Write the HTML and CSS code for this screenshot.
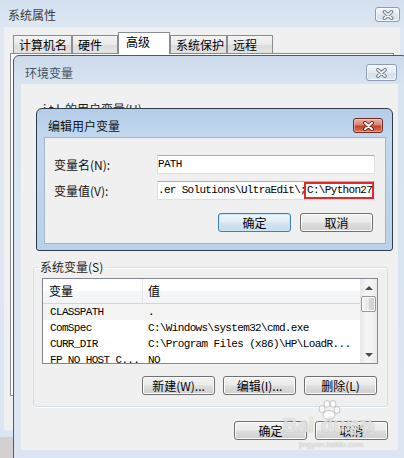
FILE: index.html
```html
<!DOCTYPE html>
<html lang="zh-CN">
<head>
<meta charset="utf-8">
<title>系统属性</title>
<link rel="stylesheet" href="styles.css">
</head>
<body>
<section class="win sys">
  <header class="tb">
    <span class="tt">系统属性</span>
    <span class="cls">
      <svg width="12" height="10" viewBox="0 0 12 10"><path d="M2.5 1.8L9.5 8.2M9.5 1.8L2.5 8.2" stroke="#6a7888" stroke-width="3.6" stroke-linecap="round"/><path d="M2.5 1.8L9.5 8.2M9.5 1.8L2.5 8.2" stroke="#f6f8fb" stroke-width="1.8" stroke-linecap="round"/></svg>
    </span>
  </header>
  <div class="client">
    <nav class="tabs">
      <span class="tab t1">计算机名</span>
      <span class="tab t2">硬件</span>
      <span class="tab t3 sel">高级</span>
      <span class="tab t4">系统保护</span>
      <span class="tab t5">远程</span>
    </nav>
    <div class="panel"></div>
  </div>
</section>

<section class="win env">
  <header class="tb">
    <span class="tt">环境变量</span>
    <span class="cls">
      <svg width="13" height="10" viewBox="0 0 13 10"><path d="M3 1.8L10 8.2M10 1.8L3 8.2" stroke="#6a7888" stroke-width="3.6" stroke-linecap="round"/><path d="M3 1.8L10 8.2M10 1.8L3 8.2" stroke="#f6f8fb" stroke-width="1.8" stroke-linecap="round"/></svg>
    </span>
  </header>
  <div class="client">
    <div class="user">
      <span class="ulbl">i t l &nbsp;的用户变量(U)</span>
    </div>
    <fieldset class="grp sysvars">
      <legend>系统变量(S)</legend>
      <div class="list">
        <div class="cols">
          <div class="hdr"><span class="c1">变量</span><span class="c2">值</span></div>
          <div class="row cur"><span class="c1">CLASSPATH</span><span class="c2">.</span></div>
          <div class="row"><span class="c1">ComSpec</span><span class="c2">C:\Windows\system32\cmd.exe</span></div>
          <div class="row"><span class="c1">CURR_DIR</span><span class="c2">C:\Program Files (x86)\HP\LoadR...</span></div>
          <div class="row"><span class="c1">FP_NO_HOST_C...</span><span class="c2">NO</span></div>
        </div>
        <div class="sb">
          <span class="sbtn"><i class="up"></i></span>
          <span class="thumb"></span>
          <span class="track"></span>
          <span class="sbtn"><i class="dn"></i></span>
        </div>
      </div>
      <div class="btns">
        <button class="btn">新建(W)...</button>
        <button class="btn">编辑(I)...</button>
        <button class="btn">删除(L)</button>
      </div>
    </fieldset>
    <div class="btns bottom">
      <button class="btn">确定</button>
      <button class="btn">取消</button>
    </div>
  </div>
</section>

<section class="win edit">
  <header class="tb">
    <span class="tt">编辑用户变量</span>
    <span class="cls red">
      <svg width="13" height="10" viewBox="0 0 13 10"><path d="M3 1.8L10 8.2M10 1.8L3 8.2" stroke="#6e2418" stroke-width="3.8" stroke-linecap="round"/><path d="M3 1.8L10 8.2M10 1.8L3 8.2" stroke="#ffffff" stroke-width="2" stroke-linecap="round"/></svg>
    </span>
  </header>
  <div class="client">
    <div class="form">
      <label class="lbl">变量名(N):</label>
      <div class="inp">PATH</div>
      <label class="lbl">变量值(V):</label>
      <div class="inp">.er Solutions\UltraEdit\;<span class="mark">C:\Python27</span></div>
    </div>
    <div class="btns">
      <button class="btn def">确定</button>
      <button class="btn">取消</button>
    </div>
  </div>
</section>

<div class="wm">
  <span class="wm-bai">Bai</span><span class="wm-paw">
    <svg width="24" height="20" viewBox="0 0 24 20"><g fill="rgba(255,255,255,0.7)" stroke="rgba(150,150,150,0.5)" stroke-width="1"><ellipse cx="5" cy="9" rx="3" ry="3.5"/><ellipse cx="10" cy="4" rx="3" ry="3.5"/><ellipse cx="16" cy="4" rx="3" ry="3.5"/><ellipse cx="20" cy="10" rx="3" ry="3.5"/><ellipse cx="12" cy="15" rx="6" ry="4.5"/></g></svg>
  </span><span class="wm-du">du</span><span class="wm-jy">经验</span>
  <span class="wm-url">jingyan.baidu.com</span>
</div>
</body>
</html>
```
FILE: styles.css
```css
* { box-sizing: border-box; margin: 0; padding: 0; }
html, body { width: 404px; height: 458px; overflow: hidden; }
body {
  position: relative;
  background: #d4d0d1;
  font-family: "Noto Sans CJK SC", "Noto Sans", sans-serif;
  font-size: 12px;
  color: #000;
}

.win { position: absolute; display: flex; flex-direction: column; }
.tb { display: flex; align-items: center; justify-content: space-between; }
.tt { line-height: 14px; white-space: nowrap; }

.cls {
  display: flex; align-items: center; justify-content: center;
  border: 1px solid #8d9cb0; border-radius: 3px;
  background: linear-gradient(#f4f7fb, #e3eaf3 50%, #d6e0eb 51%, #dfe7f1);
  box-shadow: inset 0 0 0 1px rgba(255,255,255,0.6);
}
.cls.red {
  border-color: #6e2a22;
  background: linear-gradient(#eab1a4, #d9826f 45%, #c2432b 55%, #d2775a);
  box-shadow: inset 0 0 0 1px rgba(255,220,210,0.5);
}

/* ---------- outer window: 系统属性 ---------- */
.sys {
  left: 0; top: 0; width: 404px; height: 437px;
  background: linear-gradient(#d3e0ef, #dfe8f3 30px, #dce6f2);
}
.sys .tb { height: 27px; padding: 2px 4px 0 8px; }
.sys .tt { color: #3c3c3c; }
.sys .cls { width: 25px; height: 15px; }
.sys .client {
  flex: 1; margin: 0 4px 7px 4px;
  background: #f0f0f0; padding: 5px 6px 0 6px;
}
.tabs { display: flex; align-items: flex-end; height: 22px; margin-left: 3px; position: relative; z-index: 1; }
.tab {
  height: 18px; margin-bottom: 1px;
  border: 1px solid #898c95; border-bottom: none;
  background: linear-gradient(#f4f4f4, #e9e9e9 50%, #dcdcdc 51%, #e3e3e3);
  padding: 1px 0 0 5px; line-height: 15px; white-space: nowrap;
}
.t1 { width: 59px; }
.t2 { width: 46px; }
.t3 { width: 52px; }
.t4 { width: 57px; }
.t5 { width: 46px; }
.tab.sel { height: 22px; margin-bottom: 0; background: #fff; padding: 1px 0 0 7px; }
.panel { margin-top: -1px; height: 343px; border: 1px solid #898c95; background: #fff; }

/* ---------- 环境变量 ---------- */
.env {
  left: 13px; top: 55px; width: 395px; height: 410px;
  border: 1px solid #4d5967; border-radius: 6px 6px 0 0;
  background: linear-gradient(#cbd9ea, #d9e4f1 28px, #dbe6f2);
}
.env .tb { height: 28px; padding: 5px 10px 0 11px; }
.env .tt { color: #46515e; }
.env .cls { width: 31px; height: 17px; }
.env > .client {
  margin-left: 7px; width: 377px; height: 366px;
  background: #f0f0f0; padding: 0 10px 0 12px;
  display: flex; flex-direction: column;
}

.user { height: 176px; flex: none; padding: 18px 0 0 10px; }
.ulbl { display: block; line-height: 14px; color: #1e1e1e; white-space: nowrap; }

.grp {
  border: 1px solid #d5dfe5; border-radius: 3px;
  min-inline-size: 0; padding: 4px 9px 0 8px;
  box-shadow: 0 1px 0 #fff, inset 0 1px 0 #fff;
}
.grp legend { padding: 0 2px; margin-left: -4px; line-height: 14px; color: #1e1e1e; }
.sysvars { height: 147px; flex: none; }

.list {
  width: 336px; height: 86px;
  border: 1px solid #828790; background: #fff;
  display: flex; overflow: hidden;
}
.cols { flex: 1; display: flex; flex-direction: column; }
.hdr, .row { display: grid; grid-template-columns: 100px 1fr; }
.hdr {
  height: 25px; flex: none;
  background: linear-gradient(#ffffff, #ffffff 50%, #f7f8f9 51%, #f2f3f5);
  border-bottom: 1px solid #d5d5d5;
  line-height: 24px;
}
.hdr .c1 { padding-left: 6px; border-right: 1px solid #e3e4e7; }
.hdr .c2 { padding-left: 5px; }
.row {
  height: 16px; flex: none; line-height: 16px;
  font-family: "Liberation Mono", "DejaVu Sans Mono", monospace;
  font-size: 11px; letter-spacing: -0.65px; white-space: nowrap; overflow: hidden;
}
.row .c1 { padding-left: 7px; overflow: hidden; }
.row .c2 { padding-left: 5px; }
.row.cur { background: #f3f3f3; }

.sb {
  width: 17px; flex: none; display: flex; flex-direction: column;
  background: linear-gradient(90deg, #e8e8e8, #f5f5f5 40%, #f5f5f5 60%, #ebebeb);
}
.sbtn { height: 17px; flex: none; display: flex; align-items: center; justify-content: center; }
.up, .dn { width: 0; height: 0; border-left: 4px solid transparent; border-right: 4px solid transparent; }
.up { border-bottom: 4px solid #4b4b4b; }
.dn { border-top: 4px solid #4b4b4b; }
.thumb {
  height: 16px; flex: none; margin: 0 1px;
  border: 1px solid #979797; border-radius: 2px;
  background: linear-gradient(90deg, #f3f3f3, #e9e9e9 50%, #d9d9d9 51%, #d0d0d0);
  box-shadow: inset 0 0 0 1px #fbfbfb;
}
.track { flex: 1; }

.btns { display: flex; justify-content: flex-end; gap: 8px; }
.sysvars .btns { margin-top: 12px; margin-right: 1px; }
.bottom { margin-top: 14px; }
.btn {
  width: 73px; height: 19px;
  font: inherit; color: #000; line-height: 15px;
  border: 1px solid #707070; border-radius: 3px;
  background: linear-gradient(#f2f2f2, #ebebeb 45%, #dddddd 55%, #cfcfcf);
  box-shadow: inset 0 0 0 1px #fcfcfc;
}
.btn.def {
  border-color: #3c7fb1;
  background: linear-gradient(#eef6fb, #e2eef6 45%, #d2e4f0 55%, #c6dbea);
  box-shadow: inset 0 0 0 1px #c8e8fa;
}

/* ---------- 编辑用户变量 ---------- */
.edit {
  left: 36px; top: 108px; width: 357px; height: 143px;
  border: 1px solid #2f3c4b; border-radius: 6px 6px 3px 3px;
  background: linear-gradient(#b4cce8, #c3d8ef 28px, #b9d1ea);
}
.edit .tb { height: 28px; padding: 5px 9px 0 11px; }
.edit .tt { color: #111; }
.edit .cls { width: 30px; height: 15px; }
.edit .client {
  margin-left: 7px; width: 342px; height: 107px;
  background: #f0f0f0; border: 1px solid #a0b4cc;
  padding: 17px 12px 0 9px;
  display: flex; flex-direction: column;
}
.form { display: grid; grid-template-columns: 103px 218px; row-gap: 7px; align-items: center; }
.lbl { line-height: 14px; color: #111; }
.inp {
  height: 19px; background: #fff;
  border: 1px solid #dbdfe6; border-top-color: #abadb3;
  padding-left: 0; line-height: 17px;
  font-family: "Liberation Mono", "DejaVu Sans Mono", monospace;
  font-size: 11px; letter-spacing: -0.68px; white-space: nowrap; overflow: hidden;
}
.mark {
  display: inline-block; line-height: 13px; padding-left: 1px;
  outline: 2px solid #dd2a2a; outline-offset: 0;
}
.edit .btns { margin-top: 13px; gap: 9px; margin-right: 0; }

/* ---------- watermark ---------- */
.wm {
  position: absolute; left: 283px; top: 398px; width: 110px; height: 56px;
  color: rgba(255,255,255,0.7);
  text-shadow: 0 0 1px rgba(110,110,110,0.6);
  font-family: "Liberation Sans", sans-serif; font-weight: bold;
  pointer-events: none;
}
.wm-bai { position: absolute; left: 0; top: 16px; font-size: 20px; }
.wm-paw { position: absolute; left: 34px; top: 2px; }
.wm-du { position: absolute; left: 38px; top: 16px; font-size: 20px; }
.wm-jy { position: absolute; left: 62px; top: 18px; font-size: 15px; font-family: "Noto Sans CJK SC", sans-serif; }
.wm-url { position: absolute; left: 16px; top: 42px; font-size: 8px; font-weight: normal; color: rgba(255,255,255,0.6); }
```
